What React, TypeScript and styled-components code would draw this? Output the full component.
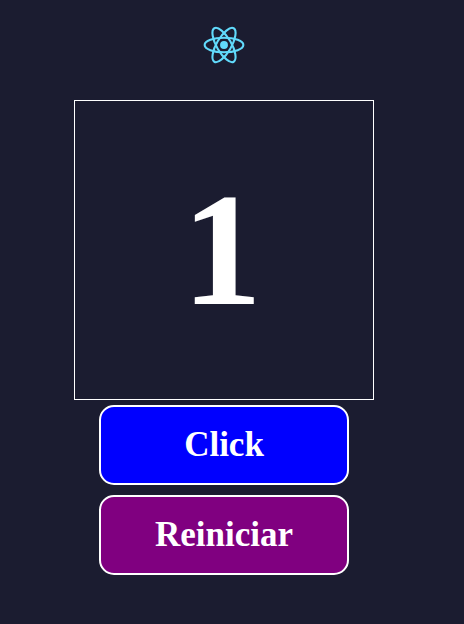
import React, { useState } from "react";
import styled, { createGlobalStyle } from "styled-components";

const GlobalStyle = createGlobalStyle`
  * { box-sizing: border-box; margin: 0; padding: 0; }
  body { background: #1b1c30; font-family: "Liberation Serif", "Times New Roman", serif; overflow: hidden; }
`;

const Page = styled.main`
  width: 448px;
  min-height: 624px;
  display: flex;
  flex-direction: column;
  align-items: center;
`;

const LogoBox = styled.header`
  height: 100px;
  padding-top: 24px;
`;

const Counter = styled.div`
  width: 300px;
  height: 300px;
  padding-right: 4px;
  border: 1px solid #fff;
  display: flex;
  align-items: center;
  justify-content: center;
  color: #fff;
  font-size: 160px;
  font-weight: 700;
`;

const Button = styled.button<{ $color: string }>`
  width: 250px;
  height: 80px;
  margin: 5px 0;
  border: 2px solid #fff;
  border-radius: 15px;
  background: ${(p) => p.$color};
  color: #fff;
  font-family: inherit;
  font-size: 35px;
  font-weight: 700;
  cursor: pointer;
`;

function ReactLogo() {
  return (
    <svg width="42" height="42" viewBox="-11.5 -11.5 23 23" aria-label="React">
      <circle r="2.15" fill="#61dafb" />
      <g fill="none" stroke="#61dafb" strokeWidth="1.15">
        <ellipse rx="10.6" ry="4" />
        <ellipse rx="10.6" ry="4" transform="rotate(60)" />
        <ellipse rx="10.6" ry="4" transform="rotate(120)" />
      </g>
    </svg>
  );
}

export default function App() {
  const [clicks, setClicks] = useState(1);
  return (
    <Page>
      <GlobalStyle />
      <LogoBox>
        <ReactLogo />
      </LogoBox>
      <Counter>{clicks}</Counter>
      <Button $color="blue" onClick={() => setClicks(clicks + 1)}>
        Click
      </Button>
      <Button $color="purple" onClick={() => setClicks(0)}>
        Reiniciar
      </Button>
    </Page>
  );
}
